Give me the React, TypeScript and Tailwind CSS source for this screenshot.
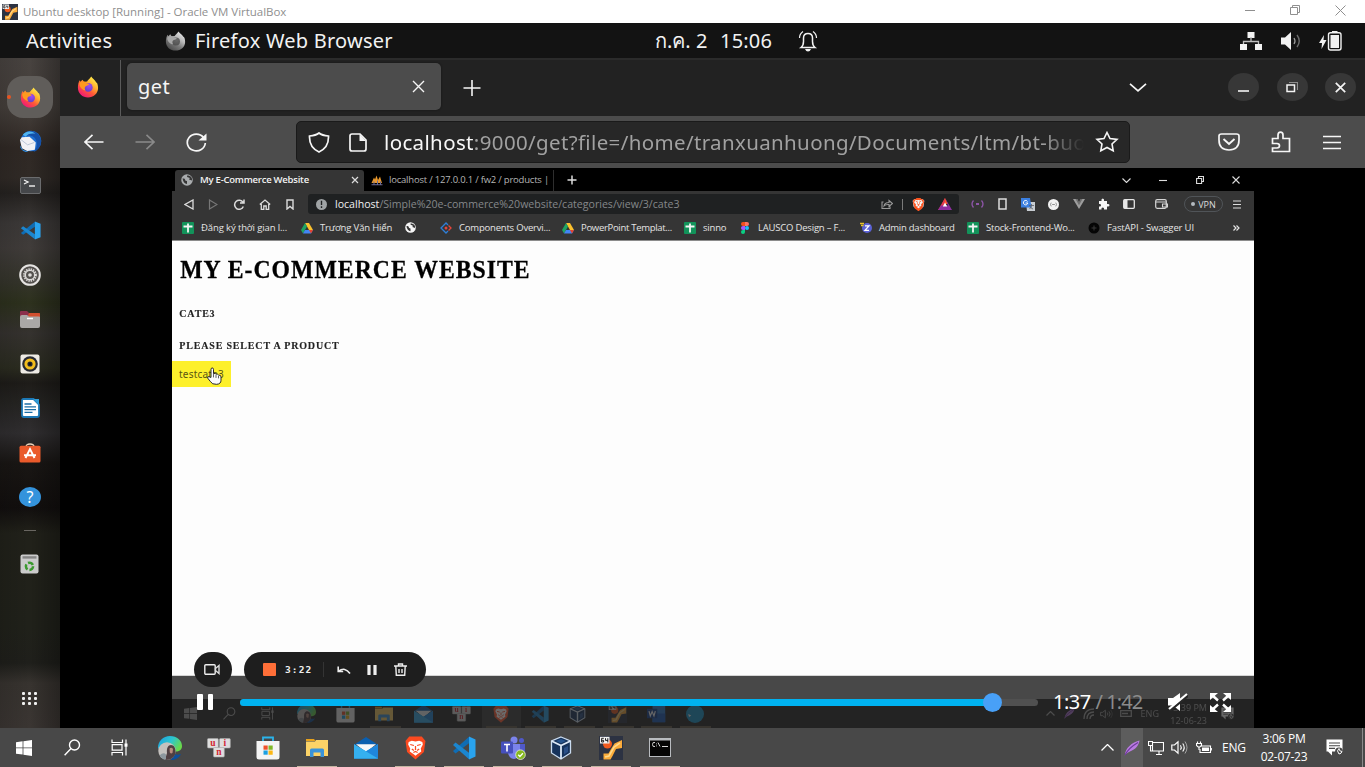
import React, { ReactNode } from "react";
import { SiBrave } from "react-icons/si";

type P = { className?: string };

function Svg({ className = "size-6", box = "0 0 24 24", children }: { className?: string; box?: string; children: ReactNode }) {
  return (
    <svg viewBox={box} className={"shrink-0 " + className} fill="none" stroke="none" preserveAspectRatio="none">
      {children}
    </svg>
  );
}

function Line({ className = "size-4", d, w = 1.5, box = "0 0 24 24" }: { className?: string; d: string; w?: number; box?: string }) {
  return (
    <Svg className={className} box={box}>
      <path d={d} stroke="currentColor" strokeWidth={w} />
    </Svg>
  );
}

/* ---------- app icons ---------- */

const FirefoxIcon = ({ className = "size-[22px]" }: P) => (
  <Svg className={className}>
    <defs>
      <linearGradient id="ffBody" x1="0.85" y1="0.05" x2="0.2" y2="0.95">
        <stop offset="0" stopColor="#fff44f" />
        <stop offset="0.35" stopColor="#ffb02e" />
        <stop offset="0.62" stopColor="#ff5a36" />
        <stop offset="1" stopColor="#f0157a" />
      </linearGradient>
      <radialGradient id="ffCore" cx="0.6" cy="0.3" r="0.8">
        <stop offset="0" stopColor="#a24bf0" />
        <stop offset="1" stopColor="#5a3fc8" />
      </radialGradient>
    </defs>
    <path d="M15.5 0.5C17 3 19.5 4 21 7c1-.2 2 3 2 6.2C23 19.2 18 23.500 12 23.500S1 19 1 12.800C1 9.500 1.600 6.500 3 4.500l.8 1.800L6 4l1.500 2.300 3.500-.2C12 4 14 3 15.500.5z" fill="url(#ffBody)" />
    <circle cx="12.300" cy="12.500" r="4.800" fill="url(#ffCore)" />
    <path d="M2.500 8c2-2.500 5.500-2.500 7.500-.5l3.500 1.300c-1 2-3.500 1.500-4.500 2.800C8 13 8.500 14.500 9.500 16 5.500 15.500 2.500 12 2.500 8z" fill="#ff9a1f" />
  </Svg>
);

const ThunderbirdIcon = ({ className = "size-[23px]" }: P) => (
  <Svg className={className}>
    <circle cx="12.500" cy="11.500" r="10.800" fill="#1f6fd0" />
    <path d="M12 1c6 0 11 5 11 11s-4 10-8 11c4-4 5-9 2-14-2-3-6-4-9-3z" fill="#1450a8" />
    <path d="M4 5c4-5 11-4 13-1-4-1-8 0-10 3z" fill="#50b4f0" />
    <path d="M1 10.500L3 7.500l8-.5 6.500 6-1 7.500-8 1.500-5.500-3z" fill="#f2f2f5" />
    <path d="M2 10l7 5.500 7-2.500" stroke="#b9c4d6" strokeWidth="1" />
    <path d="M1 16l3 4.500 6 2-3 .5C3 22 1 19 1 16z" fill="#2e8be0" />
  </Svg>
);

const TerminalIcon = () => (
  <Svg className="h-[17px] w-[21px]" box="0 0 21 17">
    <rect x=".5" y=".5" width="20" height="16" rx="1.500" fill="#45474a" stroke="#6b6c6e" />
    <path d="M4 3l4 2-4 2" stroke="#f2f2f2" strokeWidth="1.300" />
    <path d="M9 9h6" stroke="#f2f2f2" strokeWidth="1.400" />
  </Svg>
);

const VsCodeIcon = ({ className = "size-[22px]" }: P) => (
  <Svg className={className}>
    <path d="M17 .8v6.500L3.500 17.500 1 15z" fill="#0f6db5" />
    <path d="M17 23.200v-6.500L3.500 6.500 1 9z" fill="#1b86cf" />
    <path d="M17 0.500L23.500 3.500v17L17 23.500z" fill="#29a3ee" />
  </Svg>
);

const SettingsIcon = () => (
  <Svg className="size-[22px]">
    <circle cx="12" cy="12" r="10.700" fill="#55524f" stroke="#e6e4e2" strokeWidth="2.200" />
    <circle cx="12" cy="12" r="6.300" stroke="#dedcda" strokeWidth="2.400" strokeDasharray="1.500 0.970" />
    <circle cx="12" cy="12" r="5" stroke="#dedcda" strokeWidth="1.300" />
    <circle cx="12" cy="12" r="2" fill="#dedcda" />
  </Svg>
);

const FilesIcon = () => (
  <Svg className="h-[19px] w-[22px]" box="0 0 22 19">
    <path d="M1 2q0-1 1-1h6l2 2h10q1 0 1 1v8H1z" fill="#8b2f4b" />
    <path d="M10 3h10q1 0 1 1v4H8z" fill="#d2502f" />
    <path d="M1 7q0-2 2-2h5l2 1.500h10q1 0 1 1V16q0 2-2 2H3q-2 0-2-2z" fill="#aaa8a6" />
    <path d="M8 8.500h6" stroke="#fff" strokeWidth="1.500" />
  </Svg>
);

const RhythmboxIcon = () => (
  <Svg className="size-[20px]" box="0 0 20 20">
    <rect x=".5" y=".5" width="19" height="19" rx="2" fill="#eeebe4" />
    <circle cx="10" cy="10" r="7.800" fill="#272a33" />
    <circle cx="10" cy="10" r="4.100" stroke="#f2bd1d" strokeWidth="3" />
    <circle cx="10" cy="10" r="1.400" fill="#111" />
  </Svg>
);

const WriterIcon = () => (
  <Svg className="h-[20px] w-[19px]" box="0 0 19 20">
    <path d="M2.500 1h10L18 6.500V17q0 2-2 2H3q-2 0-2-2V2.500Q1 1 2.500 1z" fill="#fff" stroke="#1c78b5" strokeWidth="1.800" />
    <path d="M12 1l6 6V1z" fill="#2e9ad6" />
    <path d="M3.500 6h7M3.500 8.800h11.500M3.500 11.600h11.500M3.500 14.400h8" stroke="#1b6ea6" strokeWidth="1.300" />
  </Svg>
);

const SoftwareIcon = () => (
  <Svg className="h-[20px] w-[22px]" box="0 0 22 20">
    <path d="M7 4q0-3 4-3t4 3" stroke="#e8d3bb" strokeWidth="1.300" />
    <rect x=".5" y="2.800" width="21" height="16.700" rx="1.500" fill="#ea5a2b" />
    <path d="M6.500 15L11 6l4.500 9M5 12.200h12" stroke="#fff" strokeWidth="1.900" />
  </Svg>
);

const HelpIcon = () => (
  <div className="flex h-[20px] w-[22px] items-center justify-center rounded-[50%] bg-[#3493dc] font-['Noto_Sans',sans-serif] text-[16px] leading-none text-white">?</div>
);

const TrashAppIcon = () => (
  <Svg className="h-[20px] w-[19px]" box="0 0 19 20">
    <rect x=".5" y=".5" width="18" height="19" rx="2" fill="#cbcbcb" />
    <rect x="2.500" y="2.200" width="14" height="2.400" fill="#858585" />
    <circle cx="9.500" cy="12.300" r="3.600" stroke="#3a9a2e" strokeWidth="2.500" strokeDasharray="5.600 1.900" />
  </Svg>
);

/* ---------- windows taskbar icons ---------- */

const WinLogo = ({ className = "size-4" }: P) => (
  <Svg className={className} box="0 0 16 16">
    <path d="M0 2.200l6.600-.9v6.200H0zM7.400 1.200L16 0v7.500H7.400zM0 8.300h6.600v6.300L0 13.700zM7.400 8.300H16V16l-8.600-1.200z" fill="currentColor" />
  </Svg>
);

const SearchIcon = ({ className = "size-[17px]" }: P) => <Line className={className} box="0 0 17 17" w={1.4} d="M15.500 6a5 5 0 1 1-10 0a5 5 0 1 1 10 0M6.800 9.700L.6 16.200" />;

const TaskViewIcon = ({ className = "size-[17px]" }: P) => (
  <Svg className={className} box="0 0 17 17">
    <path d="M1 .5v3h10.500V.5M1 16.500v-3h10.500v3M1.200 5.700h9.800v5.500H1.200zM15 .5v16" stroke="currentColor" strokeWidth="1.200" />
    <rect x="13.500" y="4.500" width="3" height="3.200" fill="currentColor" />
  </Svg>
);

const EdgeIcon = ({ className = "size-6" }: P) => (
  <Svg className={className}>
    <defs>
      <linearGradient id="edgeTop" x1="0" y1="0" x2="1" y2="0.5">
        <stop offset="0" stopColor="#1c9be0" />
        <stop offset="0.55" stopColor="#2cc6d0" />
        <stop offset="1" stopColor="#6ad94a" />
      </linearGradient>
    </defs>
    <path d="M0 12C0 5 5 0 12 0s12 4.500 12 10c0 4-3 5.500-6 5.500L8 17z" fill="url(#edgeTop)" />
    <path d="M14 17c4 2 6 2 9 1-2 4-6 6-10 6z" fill="#0d4f9c" />
    <circle cx="9" cy="15" r="8.700" fill="#c4c1be" />
    <path d="M7 24c1-3 1-4 2-7-.5-5 1-8 4-8s4.500 3 4.500 6-.5 4-2 6-4.500 3-8.500 3z" fill="#4f3f42" />
    <path d="M11.500 12.500q2-1.500 3.500.5l-.5 4q-1.500 1-2.700-.5z" fill="#b98c7e" />
    <path d="M1.500 19.500q4-4 6.500-1l0 5Q4 23.500 1.500 19.500z" fill="#8d979e" />
  </Svg>
);

const KeysIcon = ({ className = "h-5 w-6" }: P) => (
  <Svg className={className} box="0 0 24 20">
    {[
      [0.5, 0.5, "u"],
      [12.5, 0.5, "i"],
      [6.5, 9.5, "n"],
    ].map(([x, y, c]) => (
      <g key={c as string}>
        <rect x={x as number} y={y as number} width="10.800" height="9.500" rx="1" fill="#dedede" stroke="#a8a8a8" strokeWidth=".6" />
        <text x={(x as number) + 5.3} y={(y as number) + 7} textAnchor="middle" fontSize="9.500" fontWeight="700" fill="#d22634" fontFamily="Liberation Serif, serif">{c}</text>
      </g>
    ))}
  </Svg>
);

const StoreIcon = ({ className = "size-6" }: P) => (
  <Svg className={className}>
    <path d="M7 6V1.500h10V6" stroke="#2bb3ea" strokeWidth="1.800" />
    <path d="M.5 5h23v16q0 2.500-2.500 2.500H3Q.5 23.500.5 21z" fill="#f4f4f4" />
    <path d="M7.500 9.500h4.200v4.200H7.500z" fill="#f0512a" />
    <path d="M12.500 9.500h4.200v4.200h-4.200z" fill="#7fb928" />
    <path d="M7.500 14.500h4.200v4.200H7.500z" fill="#1ba0e2" />
    <path d="M12.500 14.500h4.200v4.200h-4.200z" fill="#fcb714" />
  </Svg>
);

const ExplorerIcon = ({ className = "h-5 w-[22px]" }: P) => (
  <Svg className={className} box="0 0 22 20">
    <path d="M0 1h8l1.500 2H0z" fill="#e8a21c" />
    <path d="M0 3.500h9L10 2h12v16H0z" fill="#fcd367" />
    <path d="M4 19v-7q0-1.500 1.500-1.500h11Q18 10.500 18 12v7h-3.500v-4.500h-7V19z" fill="#3a93d9" />
  </Svg>
);

const MailIcon = ({ className = "size-6" }: P) => (
  <Svg className={className}>
    <path d="M0 9L12 1l12 8z" fill="#0a5fb0" />
    <path d="M2 8.500h20L12 17z" fill="#f5f7fa" />
    <path d="M0 8.500l12 7.500L24 8.500V23.500H0z" fill="#2aa3ea" />
    <path d="M0 23.500l13-8L24 8.500v15z" fill="#1f86dc" />
    <path d="M0 8.500l24 15H0z" fill="#35b0f0" />
  </Svg>
);

const BraveIcon = ({ className = "h-6 w-[21px]" }: P) => (
  <Svg className={className} box="0 0 20 24">
    <path d="M4 .5h12L19.500 5 18 16l-8 7.500L2 16 .5 5z" fill="#fb4a20" />
    <path d="M3.500 6l3-1.200L10 5.500l3.500-.7 3 1.200.5 2.500-2 4 .5 3-3.500 2.500-2 1.800-2-1.800L4.500 15.500l.5-3-2-4z" fill="#fff" />
    <path d="M5 8.500l3.500 1M15 8.500l-3.500 1M10 10v4M6.500 13l2 1.500M13.500 13l-2 1.500M8 16.500l2-1 2 1" stroke="#fb4a20" strokeWidth="1.200" />
  </Svg>
);

const BraveMark = ({ className = "size-3" }: P) => (
  <div className={"grid shrink-0 place-items-center " + className}>
    <Svg className="col-start-1 row-start-1 h-full w-full" box="0 0 20 24">
      <path d="M4 2h12l3 3-1.500 11L10 22.500 2.500 16 1 5z" fill="#f4f4f4" />
    </Svg>
    <SiBrave className="col-start-1 row-start-1 h-full w-full text-[#fb5420]" />
  </div>
);

const TeamsIcon = () => (
  <Svg className="h-6 w-[26px]" box="0 0 26 24">
    <circle cx="14" cy="4" r="3.500" fill="#7b83eb" />
    <circle cx="21.500" cy="4.500" r="2.500" fill="#5059c9" />
    <path d="M18 8h7v8q0 3-4 3h-3z" fill="#5059c9" />
    <path d="M8 8h12v9q0 5-6 6-5-.5-6-6z" fill="#7b83eb" />
    <rect x="1" y="5.500" width="12" height="12" rx="1" fill="#4650bd" />
    <path d="M4 8.500h6M7 8.500v7" stroke="#fff" strokeWidth="1.600" />
    <circle cx="20.500" cy="18.700" r="4.800" fill="#86b81f" stroke="#e9f0dc" strokeWidth=".8" />
    <path d="M18.200 18.800l1.700 1.700 3-3.300" stroke="#fff" strokeWidth="1.300" />
  </Svg>
);

const VBoxIcon = ({ className = "h-6 w-[22px]" }: P) => (
  <Svg className={className} box="0 0 22 24">
    <path d="M11 1l9.500 4v12L11 23 1.500 17V5z" fill="#16335c" stroke="#c9dbf0" strokeWidth="1.300" />
    <path d="M1.500 5L11 9.500 20.500 5M11 9.500V23" stroke="#dce9f7" strokeWidth="1.800" />
    <path d="M6 5l5-2 5 2-5 2.300z" fill="#27568f" />
    <path d="M14 12l4-2v6l-4 2.500z" fill="#2a4f86" />
  </Svg>
);

const Vm64Icon = ({ className = "size-6" }: P) => (
  <Svg className={className}>
    <path d="M0 0h24v24H0z" fill="#2c3242" />
    <circle cx="8.500" cy="8" r="4.500" fill="#f05a1e" />
    <path d="M4.500 23.500v-6h5L12 13l3.500-5.500L23 4v8l-6 1-3.500 7-2 3.500z" fill="#fbab3a" />
    <path d="M6 21l4-1 5-9 6-4" stroke="#ffd98a" strokeWidth="1.600" />
    <path d="M1 .8h9.500v6.700H1z" fill="#f2f2f2" />
    <path d="M4.800 2.300H2.600v3.700h2V4.300h-2M6.500 2.200v2.200H9M8.800 2.200v4.200" stroke="#222" strokeWidth="1" />
  </Svg>
);

const CmdIcon = () => (
  <Svg className="h-[19px] w-[22px]" box="0 0 22 19">
    <path d="M0 0h22v19H0z" fill="#b9bcc0" />
    <path d="M1 2.500h20V18H1z" fill="#050505" />
    <path d="M6 4.500q-2.500-.8-2.500 2t2.500 2M7.500 5.500v.8M7.500 7.500v.8M9 4.500l2 4M13 8.500h6" stroke="#d5d5d5" strokeWidth="1" />
  </Svg>
);

const WordIcon = ({ className }: P) => (
  <Svg className={className}>
    <path d="M7 1h16v22H7z" fill="#2b7cd3" />
    <path d="M7 12h16v11H7z" fill="#185abd" />
    <path d="M0 6h13v12H0z" fill="#103f91" />
    <path d="M2.500 9l1.700 6L6.500 9.500 8.800 15l1.700-6" stroke="#fff" strokeWidth="1.500" />
  </Svg>
);

/* ---------- shared glyphs ---------- */

const Globe = ({ className = "size-3", color = "#e8e8e8", ink = "#353535" }: P & { color?: string; ink?: string }) => (
  <Svg className={className}>
    <circle cx="12" cy="12" r="11.500" fill={color} />
    <path d="M3 9q5-1 5 2t4 3v6q-7-1-9-11zM12 3q-1 4 3 4t1 4l6 2q1-8-7-10z" fill={ink} />
  </Svg>
);

const Sheet = () => (
  <Svg className="size-3">
    <rect width="24" height="24" rx="2" fill="#12935a" />
    <path d="M12 3v18M3 9h18" stroke="#f4f4f4" strokeWidth="3.600" />
  </Svg>
);

const Drive = () => (
  <Svg className="size-3">
    <path d="M8 2h8l8 14h-8z" fill="#fbc02d" />
    <path d="M8 2l4 7-8 14-4-7z" fill="#1fa463" />
    <path d="M8 16h16l-4 7H4z" fill="#4285f4" />
    <path d="M16 16h8l-4 7z" fill="#e5432e" />
  </Svg>
);

const Diamond = () => (
  <Svg className="size-3">
    <path d="M7 7L2 12l10 10 4-4M6 8l6-6 4 4" stroke="#2f7fd8" strokeWidth="2.600" />
    <path d="M17 7l5 5-5 5" stroke="#e8453c" strokeWidth="2.600" />
    <circle cx="12" cy="12" r="3" fill="#e8453c" />
  </Svg>
);

const Figma = () => (
  <Svg className="h-3 w-3" box="0 0 24 24">
    <path d="M12 0H8a4 4 0 0 0 0 8h4z" fill="#f24e1e" />
    <path d="M12 0h4a4 4 0 0 1 0 8h-4z" fill="#ff7262" />
    <path d="M12 8H8a4 4 0 0 0 0 8h4z" fill="#a259ff" />
    <circle cx="16" cy="12" r="4" fill="#1abcfe" />
    <path d="M12 16H8a4 4 0 1 0 4 4z" fill="#0acf83" />
  </Svg>
);

const ZBadge = () => (
  <Svg className="size-3">
    <circle cx="14" cy="12" r="10" fill="#5b62d6" />
    <path d="M10 7.500h8l-8 9h8" stroke="#fff" strokeWidth="2.500" />
    <path d="M0 3h8M2 7h5" stroke="#e8c22a" strokeWidth="2.600" />
  </Svg>
);

const BlackDot = () => (
  <Svg className="size-3">
    <circle cx="12" cy="12" r="11" fill="#050505" />
    <path d="M12 7v10M7 12h10" stroke="#3b3b3b" strokeWidth="2" />
  </Svg>
);

const FeatherIcon = ({ className = "size-4" }: P) => (
  <Svg className={className} box="0 0 16 16">
    <path d="M.8 15.500C1.500 8 7 3 15.500.5 15 4 13 8 8 10.500c-3 1.500-5 2-7.200 5z" fill="#b97be0" />
    <path d="M1 15C4 9 8 6 14 2.500" stroke="#6e3a9c" strokeWidth="1.200" />
  </Svg>
);

const SpeakerIcon = ({ className = "h-[15px] w-[17px]" }: P) => (
  <Svg className={className} box="0 0 17 15">
    <path d="M.8 5h2.700L7 1.800v11.400L3.500 10H.800z" stroke="currentColor" strokeWidth="1.200" />
    <path d="M9.500 5.300q1.500 2.200 0 4.400M11.700 3.500q3 4 0 8" stroke="currentColor" strokeWidth="1.100" />
    <path d="M14 1.500q4 6 0 12" stroke="currentColor" strokeWidth="1" opacity=".5" />
  </Svg>
);

const NoticeIcon = ({ className = "h-[17px] w-[17px]" }: P) => (
  <Svg className={className} box="0 0 17 17">
    <path d="M.5.5h16v12H6v4l-4-4H.500z" fill="#fff" />
    <path d="M3 4h11M3 6.700h11M3 9.400h6" stroke="#484848" strokeWidth="1.100" />
    <circle cx="13" cy="12.500" r="3.900" fill="#484848" />
    <path d="M13 9.500q-3 2 0 5.500 2.500-.3 3-2.500-3 0-3-3z" stroke="#fff" strokeWidth="1" />
  </Svg>
);

/* ---------- sections ---------- */

const HostTitleBar = () => (
  <div className="flex h-[23px] items-center bg-white pl-[2px] text-[#8f8f8f]">
    <Vm64Icon className="size-4" />
    <span className="ml-[5px] w-[264px] whitespace-nowrap font-['Open_Sans','Noto_Sans',sans-serif] text-[11.5px] leading-none tracking-[-0.03px]">Ubuntu desktop [Running] - Oracle VM VirtualBox</span>
    <div className="ml-auto flex items-center pr-[19px] pb-[3px]">
      <Line className="mr-[35px] h-[10px] w-[10px]" box="0 0 10 10" w={1} d="M0 5.500h10" />
      <Line className="mr-[35px] h-[10px] w-[10px]" box="0 0 10 10" w={1} d="M.5 2.500h7v7h-7zM2.500 2.500v-2h7v7h-2" />
      <Line className="h-[11px] w-[11px]" box="0 0 11 11" w={1} d="M.5.5l10 10M10.500.5l-10 10" />
    </div>
  </div>
);

const GnomeBar = () => (
  <div className="flex h-[35px] items-center bg-[#131313] pl-[26px] text-[20px] leading-none text-[#f2f2f2]">
    <span className="w-[139px] whitespace-nowrap tracking-[0.300px]">Activities</span>
    <FirefoxIcon className="h-[20px] w-[21px] grayscale" />
    <span className="ml-[9px] w-[460px] whitespace-nowrap tracking-[0.230px]">Firefox Web Browser</span>
    <span className="w-[65px] whitespace-nowrap">ก.ค. 2</span>
    <span className="w-[78px] whitespace-nowrap tracking-[0.200px]">15:06</span>
    <Svg className="h-[22px] w-[20px]" box="0 0 20 22">
      <path d="M3 17.500h14q-2.500-2-2.500-6V8q0-4.500-4.500-4.500T5.500 8v3.500q0 4-2.500 6z" stroke="#f2f2f2" strokeWidth="1.500" />
      <path d="M1.500 8q0-4 3.500-6.500M18.500 8q0-4-3.500-6.500" stroke="#f2f2f2" strokeWidth="1.200" />
      <path d="M7 19h6q-1 2.500-3 2.500T7 19z" fill="#f2f2f2" />
    </Svg>
    <div className="ml-auto flex items-center pr-[23px]">
      <Svg className="h-[18px] w-[22px]" box="0 0 22 18">
        <path d="M7.500 0h7v6h-7zM0 12h7v6H0zM15 12h7v6h-7z" fill="#f2f2f2" />
        <path d="M11 5v4M3.500 12V9.500h15V12" stroke="#bdbdbd" strokeWidth="1.300" />
      </Svg>
      <Svg className="ml-[19px] h-[18px] w-[20px]" box="0 0 20 18">
        <path d="M0 5.500h4L10 0v18l-6-5.500H0z" fill="#f2f2f2" />
        <path d="M13 6q2 3 0 6" stroke="#9a9a9a" strokeWidth="1.300" />
        <path d="M16 3q4.500 6 0 12" stroke="#6a6a6a" strokeWidth="1.400" />
      </Svg>
      <Svg className="ml-[18px] h-[20px] w-[23px]" box="0 0 23 20">
        <path d="M5 4L0 12h3l-.5 6L7.500 9H4.500z" fill="#f2f2f2" />
        <rect x="9.500" y="1.800" width="12.500" height="17.200" rx="2" stroke="#f2f2f2" strokeWidth="1.400" />
        <path d="M13 .5h5.500" stroke="#f2f2f2" strokeWidth="1.200" />
        <rect x="11.500" y="4" width="8.500" height="13" fill="#f2f2f2" />
      </Svg>
    </div>
  </div>
);

const DockCell = ({ children, active = false }: { children: ReactNode; active?: boolean }) => (
  <div className="flex h-[44.45px] items-center justify-center">
    {active ? (
      <div className="relative flex h-[42px] w-[46px] items-center justify-center rounded-[16px] bg-[#605d5a]">
        {children}
        <span className="absolute top-[19px] left-0 size-[4px] rounded-full bg-[#e95420]" />
      </div>
    ) : (
      children
    )}
  </div>
);

const Dock = () => (
  <div className="flex h-[670px] w-[60px] shrink-0 flex-col bg-[linear-gradient(90deg,rgba(0,0,0,0.12),rgba(0,0,0,0)_50%,rgba(0,0,0,0.3)),linear-gradient(180deg,#484340_0px,#453f3b_50px,#302925_90px,#302a26_120px,#252220_135px,#3c3938_165px,#403c3a_190px,#34342a_225px,#2d311d_245px,#35322f_275px,#2b2c20_310px,#1e1c19_325px,#252422_345px,#302e30_375px,#191614_405px,#120f0e_450px,#21211a_475px,#20211a_570px,#1f1f1b_605px,#37332f_625px,#3a3532_670px)] pt-[16.800px]">
    <DockCell active><FirefoxIcon className="size-[21px]" /></DockCell>
    <DockCell><ThunderbirdIcon /></DockCell>
    <DockCell><TerminalIcon /></DockCell>
    <DockCell><VsCodeIcon className="h-[19px] w-[21px]" /></DockCell>
    <DockCell><SettingsIcon /></DockCell>
    <DockCell><FilesIcon /></DockCell>
    <DockCell><RhythmboxIcon /></DockCell>
    <DockCell><WriterIcon /></DockCell>
    <DockCell><SoftwareIcon /></DockCell>
    <DockCell><HelpIcon /></DockCell>
    <div className="mt-[10.700px] h-[1px] w-[12px] self-center bg-[#696661]" />
    <div className="mt-[23px] mr-[1px] self-center"><TrashAppIcon /></div>
    <div className="mt-[117.700px] mr-[1px] grid grid-cols-3 gap-x-[3px] gap-y-[2px] self-center">
      {Array.from({ length: 9 }, (_, i) => (
        <span key={i} className="size-[3px] rounded-[1px] bg-[#f0f0f0]" />
      ))}
    </div>
  </div>
);

const RoundButton = ({ children }: { children: ReactNode }) => (
  <div className="flex h-[28px] w-[31px] items-center justify-center rounded-[50%] bg-[#373737] text-[#f4f4f4]">{children}</div>
);

const FirefoxTabs = () => (
  <div className="flex h-[58px] items-center border-t-2 border-[#2b2b2b] bg-[#222222] text-[#f6f6f6]">
    <div className="flex h-full w-[61px] items-center border-r border-[#5a5a5a] pb-[3px] pl-[17px]"><FirefoxIcon className="size-[22px]" /></div>
    <div className="mb-[3px] ml-[6px] flex h-[47px] w-[314px] items-center justify-between rounded-[5px] bg-[#4c4c4c] pr-[16px] pl-[11px] text-[20px] leading-none shadow-[0_0_2px_#111]">
      <span className="tracking-[0.400px]">get</span>
      <Line className="size-[13px]" box="0 0 13 13" w={1.4} d="M1 1l11 11M12 1L1 12" />
    </div>
    <Line className="mb-[1px] ml-[22px] size-[18px]" box="0 0 18 18" w={1.6} d="M9 1v16M.5 9h17" />
    <div className="mb-[2px] ml-auto flex items-center pr-[9px]">
      <Line className="mr-[81px] h-[9px] w-[18px]" box="0 0 18 9" w={1.7} d="M1 .8l8 7 8-7" />
      <div className="flex gap-[17.500px]">
        <RoundButton><Line className="mt-[7px] h-[2px] w-[11px]" box="0 0 11 2" w={1.6} d="M0 1h11" /></RoundButton>
        <RoundButton>
          <Svg className="size-[12px]" box="0 0 12 12">
            <path d="M1 4h7.500v6.500H1z" stroke="#f4f4f4" strokeWidth="1.500" />
            <path d="M3 1.500h8.500V9" stroke="#8e8e8e" strokeWidth="1.200" />
          </Svg>
        </RoundButton>
        <RoundButton><Line className="size-[11px]" box="0 0 11 11" w={1.7} d="M.8.800l9.400 9.400M10.200.800L.8 10.200" /></RoundButton>
      </div>
    </div>
  </div>
);

const FirefoxNav = () => (
  <div className="flex h-[52px] items-center bg-[#4c4c4c] text-[#f6f6f6]">
    <div className="flex w-[236px] items-center pl-[24px]">
      <Line className="h-[16px] w-[20px]" box="0 0 20 16" w={1.6} d="M19.500 8H1M8.500.8L1 8l7.500 7.200" />
      <Line className="ml-[31px] h-[16px] w-[20px] text-[#8a8a8a]" box="0 0 20 16" w={1.6} d="M.5 8H19M11.500.8L19 8l-7.500 7.200" />
      <Svg className="ml-[31px] h-[19px] w-[21px]" box="0 0 21 19">
        <path d="M17.500 4.500A9 8.300 0 1 0 19.300 10" stroke="#f6f6f6" strokeWidth="1.700" />
        <path d="M20.500.5V7.500h-8z" fill="#f6f6f6" />
      </Svg>
    </div>
    <div className="flex h-[42px] w-[834px] items-center rounded-[5px] border border-[#1a1a1a] bg-[#272727] pl-[11px]">
      <Line className="h-[21px] w-[22px]" box="0 0 22 21" w={1.7} d="M11 1Q14 3.500 20.500 4q.5 11.500-9.500 16Q1 15.500 1.500 4 8 3.500 11 1z" />
      <Svg className="ml-[19px] h-[19px] w-[18px]" box="0 0 18 19">
        <path d="M3 1h8l6 6v9q0 2-2 2H3q-2 0-2-2V3q0-2 2-2z" stroke="#f6f6f6" strokeWidth="1.700" />
        <path d="M10.500 1v7H17z" fill="#f6f6f6" />
      </Svg>
      <div className="ml-[17px] w-[700px] overflow-hidden whitespace-nowrap py-1 text-[20.500px] leading-[28px] tracking-[0.360px] text-[#a1a1a1] [mask-image:linear-gradient(90deg,#000_94%,transparent)]">
        <span className="text-[#f8f8f8]">localhost</span>:9000/get?file=/home/tranxuanhuong/Documents/ltm/bt-buoi
      </div>
      <Line className="ml-[11px] h-[22px] w-[24px]" box="0 0 24 22" w={1.6} d="M12 1.500l3 6 7 .9-5 4.600 1.200 6.700L12 16.500l-6.200 3.200L7 13 2 8.400l7-.9z" />
    </div>
    <Svg className="ml-[88px] h-[18px] w-[22px]" box="0 0 22 18">
      <path d="M3.500 1h15Q21 1 21 3v4q0 10-10 10T1 7V3q0-2 2.500-2z" stroke="#f6f6f6" strokeWidth="1.700" />
      <path d="M5.500 6l5.500 5 5.500-5" stroke="#f6f6f6" strokeWidth="1.900" />
    </Svg>
    <Line className="ml-[31px] h-[22px] w-[20px]" box="0 0 20 22" w={1.7} d="M1.500 7.500H7V4q0-2.800 2.500-2.800T12 4v3.500h6.500V20.500h-17V17H6q2.500 0 2.500-2.200T6 12.500H1.500z" />
    <Line className="ml-[32px] h-[15px] w-[18px]" box="0 0 18 15" w={1.600} d="M0 1.500h18M0 7.500h18M0 13.500h18" />
  </div>
);

const Bookmark = ({ icon, label, className }: { icon: ReactNode; label?: string; className: string }) => (
  <div className={"flex shrink-0 items-center gap-[7px] whitespace-nowrap " + className}>
    {icon}
    {label && <span>{label}</span>}
  </div>
);

const InnerBrowser = () => (
  <div className="font-['Open_Sans','Noto_Sans',sans-serif] text-[9.5px] leading-none text-[#dcdcdc]">
    <div className="flex h-[23px] items-end bg-black">
      <div className="ml-[3px] flex h-[21px] w-[189px] items-center rounded-t-[3px] bg-[#353535] pr-[5px] pb-[1px] pl-[6px]">
        <Globe color="#a9acae" />
        <span className="ml-[7px] whitespace-nowrap font-semibold tracking-[-0.230px] text-[#f3f3f3]">My E-Commerce Website</span>
        <Line className="ml-auto size-[8px]" box="0 0 8 8" w={1.2} d="M1 1l6 6M7 1L1 7" />
      </div>
      <div className="flex h-[21px] w-[190px] items-center border-r border-[#2e2e2e] pb-[1px] pl-[7px]">
        <Svg className="size-3">
          <path d="M1 18L6 7l2 4 3-8 3 9 4-7 4 13z" fill="#e9982c" />
          <path d="M1 21.500h22M6 15v7M13 13v9M19 15v7" stroke="#6b6a94" strokeWidth="2" />
        </Svg>
        <span className="ml-[6px] whitespace-nowrap tracking-[-0.210px] text-[#b5b5b5]">localhost / 127.0.0.1 / fw2 / products |</span>
      </div>
      <div className="flex h-[21px] flex-1 items-center pb-[1px] pl-[13px]">
        <Line className="size-[10px]" box="0 0 10 10" w={1.5} d="M5 .5v9M.5 5h9" />
        <div className="ml-auto flex items-center gap-[28.300px] pr-[14px]">
          <Line className="h-[5px] w-[9px]" box="0 0 9 5" w={1.1} d="M.5.5l4 4 4-4" />
          <Line className="h-[8px] w-[8px]" box="0 0 8 8" w={1.1} d="M0 4.500h8" />
          <Line className="h-[8px] w-[8px]" box="0 0 8 8" w={1.1} d="M.6 2.500h5v5h-5zM2.500 2.500v-2h5v5h-2" />
          <Line className="h-[8px] w-[8px]" box="0 0 8 8" w={1.1} d="M.5.5l7 7M7.500.5l-7 7" />
        </div>
      </div>
    </div>
    <div className="flex h-[26px] items-center bg-[#353535] pl-[12px]">
      <div className="flex w-[124px] items-center gap-[14.300px]">
        <Line className="h-[11px] w-[10px]" box="0 0 10 11" w={1.3} d="M9 1v9L1 5.500z" />
        <Line className="h-[11px] w-[10px] text-[#777]" box="0 0 10 11" w={1.2} d="M1.500 1v9l7.500-4.500z" />
        <Line className="h-[11px] w-[12px]" box="0 0 12 11" w={1.500} d="M10 3.500A4.500 4.500 0 1 0 10.300 7.500M7 4h4V.5" />
        <Line className="h-[11px] w-[12px]" box="0 0 12 11" w={1.3} d="M.8 5.500L6 1l5.200 4.500M2.300 5v5.300h2.500V7h2.400v3.300h2.500V5" />
        <Line className="h-[11px] w-[10px]" box="0 0 10 11" w={1.400} d="M2 1h6v9L5 7.500 2 10z" />
      </div>
      <div className="flex h-[20px] w-[651px] items-center rounded-[3px] bg-[#1f2122] pl-[8px] text-[10.600px]">
        <Svg className="size-[11px]">
          <circle cx="12" cy="12" r="12" fill="#9fa3a5" />
          <path d="M12 4v9M12 16v3.500" stroke="#1f2122" strokeWidth="3" />
        </Svg>
        <span className="ml-[8px] whitespace-nowrap text-[#85888a]"><span className="text-[#efefef]">localhost</span>/Simple%20e-commerce%20website/categories/view/3/cate3</span>
        <div className="ml-auto flex items-center pr-[7px]">
          <Line className="h-[10px] w-[12px] text-[#9a9a9a]" box="0 0 12 10" w={1.1} d="M2.500 3H1v6.500h8V7.500M3 7q.5-3.500 5-3.500V1.500L11.500 4.500 8 7.500V5.500Q4.500 5.200 3 7z" />
          <span className="mr-[9px] ml-[9px] h-[11px] w-[1px] bg-[#7a7a7a]" />
          <BraveMark className="h-[13px] w-[13px]" />
          <Svg className="ml-[13px] h-[12px] w-[14px]" box="0 0 14 12">
            <path d="M7 0l3 6H4z" fill="#ff5a1f" />
            <path d="M7 0L0 12h4l3-5z" fill="#e23a4f" />
            <path d="M0 12h14L7 0l3 7.500H3z" fill="#8c2f9f" />
            <path d="M7 4.500l2.200 4H4.800z" fill="#fff" />
          </Svg>
        </div>
      </div>
      <div className="flex w-[152px] items-center pl-[12px]">
        <Svg className="h-[8px] w-[13px]" box="0 0 13 8"><path d="M2.500.5q-3 3.500 0 7M10.500.5q3 3.500 0 7" stroke="#8d55a8" strokeWidth="1.300" /><path d="M5 4h3" stroke="#8d55a8" strokeWidth="2" /></Svg>
        <Line className="ml-[14px] h-[12px] w-[9px]" box="0 0 9 12" w={1.500} d="M1 1h7v10H1z" />
        <Svg className="ml-[14px] h-[13px] w-[14px]" box="0 0 14 13">
          <path d="M5 4h9v9H6z" fill="#c8cdd2" />
          <path d="M0 0h9l1.500 9.500H0z" fill="#3b7fe0" />
          <path d="M6.500 3.500A2.200 2.200 0 1 0 6.800 5H4.500" stroke="#fff" strokeWidth="1" />
          <path d="M8 7.500h5M10.500 6v1.500Q10 10 8.500 11M9 8.500q1 2 3 2.500" stroke="#5a6068" strokeWidth=".8" />
        </Svg>
        <Svg className="ml-[13px] size-[11px]"><circle cx="12" cy="12" r="12" fill="#f2f2f2" /><path d="M7 8q-3 4 0 8M17 8q3 4 0 8M9 12h6" stroke="#888" strokeWidth="2" /></Svg>
        <Svg className="ml-[14px] h-[10px] w-[12px]" box="0 0 12 10"><path d="M0 0h4l2 4 2-4h4L6 10z" fill="#9d9d9d" /><path d="M2.500 0H4.500L6 3l1.500-3h2L6 6.200z" fill="#6f6f6f" /></Svg>
        <Svg className="ml-[13px] size-[12px]"><path d="M2 6h5q-1-5 2.500-5T12 6h6v6q5-1 5 2.500T18 17v6h-6q1-4-2.500-4T7 23H2v-6q4 1 4-2.500T2 12z" fill="#f5f5f5" /></Svg>
      </div>
      <Svg className="ml-[12px] h-[10px] w-[12px]" box="0 0 12 10"><rect x=".7" y=".7" width="10.600" height="8.600" rx="1" stroke="#e6e6e6" strokeWidth="1.300" /><path d="M1 1h3.500v8H1z" fill="#e6e6e6" /></Svg>
      <Svg className="ml-[20px] h-[10px] w-[13px]" box="0 0 13 10"><rect x=".7" y=".7" width="10.600" height="8.600" rx="1.500" stroke="#d6d6d6" strokeWidth="1.200" /><path d="M1 3h10M7.500 5h5v3h-5z" stroke="#d6d6d6" strokeWidth="1.100" /></Svg>
      <div className="ml-[16px] flex h-[16px] w-[39px] shrink-0 items-center justify-center gap-[3px] rounded-full border border-[#505458] text-[9px]">
        <span className="size-[4px] rounded-full bg-[#b4bac0]" />VPN
      </div>
      <Line className="ml-[10px] h-[9px] w-[8px]" box="0 0 8 9" w={1.2} d="M0 1h8M0 4.500h8M0 8h8" />
    </div>
    <div className="flex h-[24px] items-center overflow-hidden border-b border-[#8c8c8c] bg-[#353535] pb-[2px] pl-[10px] text-[#e4e4e4]">
      <Bookmark className="w-[119px] tracking-[-0.12px]" icon={<Sheet />} label="Đăng ký thời gian l..." />
      <Bookmark className="w-[104px] tracking-[-0.15px]" icon={<Drive />} label="Trương Văn Hiển" />
      <Bookmark className="w-[35px]" icon={<Globe className="size-[11px]" color="#f5f5f5" />} />
      <Bookmark className="w-[122px] tracking-[-0.2px]" icon={<Diamond />} label="Components Overvi..." />
      <Bookmark className="w-[122px] tracking-[-0.3px]" icon={<Drive />} label="PowerPoint Templat..." />
      <Bookmark className="w-[55px] tracking-[-0.2px]" icon={<Sheet />} label="sinno" />
      <Bookmark className="w-[121px] tracking-[-0.2px]" icon={<Figma />} label="LAUSCO Design – F..." />
      <Bookmark className="w-[107px] tracking-[-0.25px]" icon={<ZBadge />} label="Admin dashboard" />
      <Bookmark className="w-[121px] tracking-[-0.2px]" icon={<Sheet />} label="Stock-Frontend-Wo..." />
      <Bookmark className="w-[145px] tracking-[-0.15px]" icon={<BlackDot />} label="FastAPI - Swagger UI" />
      <Line className="h-[6px] w-[7px]" box="0 0 7 6" w={1.2} d="M.5.5L3 3 .5 5.500M3.500.5L6 3 3.500 5.500" />
    </div>
  </div>
);

const Shop = () => (
  <div className="relative h-[435px] border-b border-[#d5d5d5] bg-[#fdfdfd] font-['Liberation_Serif',serif] font-bold leading-none text-black">
    <h1 className="origin-left scale-x-[0.912] pt-[16px] pl-[9px] text-[26px] tracking-[1.1px] whitespace-nowrap [-webkit-text-stroke:0.3px_#000]">MY E-COMMERCE WEBSITE</h1>
    <h2 className="mt-[25px] origin-left scale-x-[0.910] pl-[8px] text-[11px] tracking-[0.9px] text-[#222] [-webkit-text-stroke:0.15px_#222]">CATE3</h2>
    <h2 className="mt-[21px] origin-left scale-x-[0.910] pl-[8px] text-[11px] tracking-[0.9px] whitespace-nowrap text-[#222] [-webkit-text-stroke:0.15px_#222]">PLEASE SELECT A PRODUCT</h2>
    <div className="mt-[10px] flex h-[26px] w-[59px] items-center bg-[#fdf02c] pl-[7px] font-['Noto_Sans',sans-serif] text-[10px] font-normal tracking-[0.2px] text-[#5a5412]">testcate3</div>
    <Svg className="absolute top-[126px] left-[34px] h-[18px] w-[16px]" box="0 0 16 19">
      <path d="M5 11V2.500Q5 1 6.200 1t1.300 1.500V7q2-.5 2.500.5 2-.3 2.500 1 2.500-.2 2.500 2V14q0 4-4.500 4.300Q6 18.500 4.500 15.500L1.500 11.500q0-1.500 1.500-1.300z" fill="#fafafa" stroke="#222" strokeWidth="1" />
      <path d="M7.500 7.500V11M10 8.500v3M12.500 9.500v2.500" stroke="#333" strokeWidth=".8" />
    </Svg>
  </div>
);

const Dim = ({ children, on = false, focus = false }: { children: ReactNode; on?: boolean; focus?: boolean }) => (
  <div className={"flex h-full w-[38.800px] shrink-0 flex-col items-center justify-end " + (focus ? "bg-[#2b2b2b]" : "")}>
    <div className="flex flex-1 items-center justify-center pt-[2px] opacity-30">{children}</div>
    <div className={"h-[2px] w-[31px] " + (on ? "bg-[#37342f]" : "")} />
  </div>
);

const RecordedTaskbar = () => (
  <div className="flex h-[29px] items-center bg-[#232323] text-[#aaa]">
    <Dim><WinLogo className="mr-[2px] size-[13px]" /></Dim>
    <Dim><SearchIcon className="mr-[2px] size-[13px]" /></Dim>
    <Dim><TaskViewIcon className="mr-[3px] size-[13px]" /></Dim>
    <Dim><EdgeIcon className="mr-[2px] size-[19px]" /></Dim>
    <Dim><StoreIcon className="mr-[2px] size-[19px]" /></Dim>
    <Dim on><ExplorerIcon className="mr-[2px] h-[16px] w-[18px]" /></Dim>
    <Dim><MailIcon className="mr-[2px] size-[19px]" /></Dim>
    <Dim><KeysIcon className="mr-[2px] h-[16px] w-[19px]" /></Dim>
    <Dim on focus><BraveIcon className="mr-[2px] h-[18px] w-[16px]" /></Dim>
    <Dim on><VsCodeIcon className="mr-[2px] size-[18px]" /></Dim>
    <Dim on><VBoxIcon className="mr-[3px] h-[18px] w-[17px]" /></Dim>
    <Dim on><Vm64Icon className="mr-[2px] size-[19px]" /></Dim>
    <Dim on><WordIcon className="size-[19px]" /></Dim>
    <Dim on><Svg className="mr-[2px] size-[18px]"><circle cx="12" cy="12" r="12" fill="#1597cf" /><path d="M3 12l4 2-3 2" fill="#fff" /></Svg></Dim>
    <div className="ml-auto flex items-center pr-[20px] text-[9px] leading-none text-[#aaa] opacity-30">
      <Line className="h-[5px] w-[9px]" box="0 0 9 5" w={1.2} d="M.5 4.500l4-4 4 4" />
      <FeatherIcon className="ml-[9px] size-[11px]" />
      <Line className="ml-[8px] size-[11px]" box="0 0 11 11" w={1.3} d="M1 11Q1 1 11 1M4 11q0-7 7-7M7 11q0-4 4-4" />
      <SpeakerIcon className="ml-[6px] h-[10px] w-[13px]" />
      <Line className="ml-[7px] h-[7px] w-[12px]" box="0 0 12 7" w={1.3} d="M.7.700h10.600v5.600H.7zM2 3.500h6" />
      <span className="ml-[9px]">ENG</span>
      <div className="ml-[10px] flex w-[38px] flex-col items-end gap-[4px] whitespace-nowrap text-[9px]">
        <span>3:39 PM</span>
        <span>12-06-23</span>
      </div>
      <NoticeIcon className="ml-[14px] size-[13px]" />
    </div>
  </div>
);

const RecorderPill = () => (
  <div className="absolute bottom-[41px] left-[21.500px] flex items-center gap-[12px]">
    <div className="flex h-[35px] w-[38.500px] items-center justify-center rounded-full bg-[#1e1e1e]">
      <Svg className="h-[11px] w-[17px]" box="0 0 17 11">
        <rect x=".8" y=".8" width="10.400" height="9.400" rx="1" stroke="#eee" strokeWidth="1.400" />
        <path d="M11.500 4.500l3.500-3v8l-3.500-3z" stroke="#ddd" strokeWidth="1.400" />
      </Svg>
    </div>
    <div className="flex h-[35px] w-[182px] items-center rounded-full bg-[#1e1e1e] pl-[19px] text-[#eee]">
      <span className="size-[13px] rounded-[1px] bg-[#ff6f38]" />
      <span className="ml-[9px] w-[27px] font-['DejaVu_Sans_Mono',monospace] text-[9.500px] leading-none font-bold tracking-[1.100px]">3:22</span>
      <span className="ml-[11px] h-[15px] w-[1px] bg-[#343434]" />
      <Line className="ml-[13px] h-[8px] w-[14px]" box="0 0 14 8" w={1.6} d="M1.200.5v5h5M1.500 5.200Q8 .5 13 7.500" />
      <Line className="ml-[16px] h-[10px] w-[10px]" box="0 0 10 10" w={3.2} d="M2 0v10M8 0v10" />
      <Line className="ml-[17px] h-[13px] w-[13px]" box="0 0 13 13" w={1.4} d="M0 3h13M4.500 3V1h4v2M1.800 3l.5 9.200h8.400L11.200 3M5 6v4M8 6v4" />
    </div>
  </div>
);

const PlayerControls = () => (
  <div className="absolute inset-x-0 bottom-[11px] flex h-[30px] items-center pl-[25px] text-[20px] leading-none text-white">
    <div className="flex gap-[5px]">
      <span className="h-[16px] w-[5.500px] rounded-[1px] bg-white" />
      <span className="h-[16px] w-[5.500px] rounded-[1px] bg-white" />
    </div>
    <div className="ml-[27px] flex h-[7px] w-[798px] items-center rounded-full bg-[#505050]">
      <div className="h-full w-[744px] rounded-l-full bg-[#00b2f0]" />
      <div className="-ml-[1px] size-[19px] rounded-full bg-[#48a0f7]" />
    </div>
    <span className="ml-[15px] w-[104px] whitespace-nowrap tracking-[-0.500px]">1:37 <span className="tracking-[-0.900px] text-[#8c8c8c]">/ 1:42</span></span>
    <Svg className="ml-[11px] h-[18px] w-[20px]" box="0 0 20 18">
      <path d="M0 5h5L12 0v18l-7-5.500H0z" fill="#fff" />
      <path d="M1.500 18L20 2.500" stroke="#272727" strokeWidth="2.500" />
      <path d="M1 16L19 1" stroke="#fff" strokeWidth="2.200" />
    </Svg>
    <Svg className="ml-[22px] h-[19px] w-[21px]" box="0 0 21 19">
      <path d="M0 0h8L0 7zM21 0h-8l8 7zM0 19h8l-8-7zM21 19h-8l8-7z" fill="#fff" />
      <path d="M2 2l6 5.500M19 2l-6 5.500M2 17l6-5.500M19 17l-6-5.500" stroke="#fff" strokeWidth="2.400" />
    </Svg>
  </div>
);

const VideoStage = () => (
  <div className="flex h-[560px] justify-start bg-black pl-[112px]">
    <div className="relative w-[1082px]">
      <InnerBrowser />
      <Shop />
      <div className="h-[23px] bg-[#484848]" />
      <RecordedTaskbar />
      <RecorderPill />
      <PlayerControls />
    </div>
  </div>
);

const Task = ({ children, on = false }: { children: ReactNode; on?: boolean }) => (
  <div className="flex h-full w-[49px] shrink-0 flex-col items-center">
    <div className="flex flex-1 items-center pt-[1px]">{children}</div>
    <div className={"h-[1px] w-[40px] " + (on ? "bg-[#c3b6a2]" : "")} />
  </div>
);

const HostTaskbar = () => (
  <div className="flex h-[39px] items-center bg-[#484848] font-['Open_Sans','Noto_Sans',sans-serif] text-white">
    <div className="flex w-[48px] justify-center"><WinLogo /></div>
    <div className="flex w-[48px] justify-center"><SearchIcon /></div>
    <div className="flex w-[49.900px] justify-center pr-[2px]"><TaskViewIcon /></div>
    <Task><EdgeIcon /></Task>
    <Task><KeysIcon /></Task>
    <Task><StoreIcon /></Task>
    <Task on><ExplorerIcon /></Task>
    <Task><MailIcon className="h-[23px] w-6" /></Task>
    <Task on><BraveIcon /></Task>
    <Task on><VsCodeIcon className="h-[24px] w-6" /></Task>
    <Task on><TeamsIcon /></Task>
    <Task on><VBoxIcon className="mr-[2px] h-6 w-[22px]" /></Task>
    <Task on><Vm64Icon /></Task>
    <Task on><CmdIcon /></Task>
    <div className="ml-auto flex h-full items-center">
      <Line className="mr-[7px] h-[7px] w-[13px]" box="0 0 13 7" w={1.3} d="M.5 6.500l6-6 6 6" />
      <div className="flex h-full w-[22px] items-center justify-center bg-[#5d5d5d]"><FeatherIcon /></div>
      <Svg className="ml-[5px] h-[14px] w-[16px]" box="0 0 16 14">
        <path d="M4.500 1.500h11v8.500h-11zM8 13.500h6M11 10v3.500M.5.500h4v4h-4zM2.500 4.500v5.500h2" stroke="#fff" strokeWidth="1.100" />
      </Svg>
      <SpeakerIcon className="ml-[7px] h-[15px] w-[17px]" />
      <Svg className="ml-[8px] h-[13px] w-[16px]" box="0 0 16 13">
        <path d="M5 5h9.500v6.500H4V8M15.700 7v2.500" stroke="#fff" strokeWidth="1.100" />
        <path d="M6 6.500h7v3.500H6z" fill="#fff" />
        <path d="M.5 2.500h5v2L3.800 6H2.200L.5 4.500zM1.500.5v2M4.500.5v2M3 6v3" stroke="#fff" strokeWidth="1.100" />
      </Svg>
      <span className="ml-[10px] w-[24px] text-[12px] leading-none tracking-[-0.2px]">ENG</span>
      <div className="ml-[11px] flex w-[54px] flex-col items-center gap-[6px] whitespace-nowrap text-[12px] leading-none tracking-[-0.3px]">
        <span>3:06 PM</span>
        <span>02-07-23</span>
      </div>
      <NoticeIcon className="ml-[15px] size-[17px]" />
      <div className="ml-[19px] h-full w-[3px] border-l border-[#8a8a8a]" />
    </div>
  </div>
);

export default function App() {
  return (
    <div className="flex h-[767px] w-[1365px] flex-col overflow-hidden bg-black font-['Noto_Sans','Open_Sans',sans-serif]">
      <HostTitleBar />
      <GnomeBar />
      <div className="flex">
        <Dock />
        <div className="w-[1305px] shrink-0">
          <FirefoxTabs />
          <FirefoxNav />
          <VideoStage />
        </div>
      </div>
      <HostTaskbar />
    </div>
  );
}
